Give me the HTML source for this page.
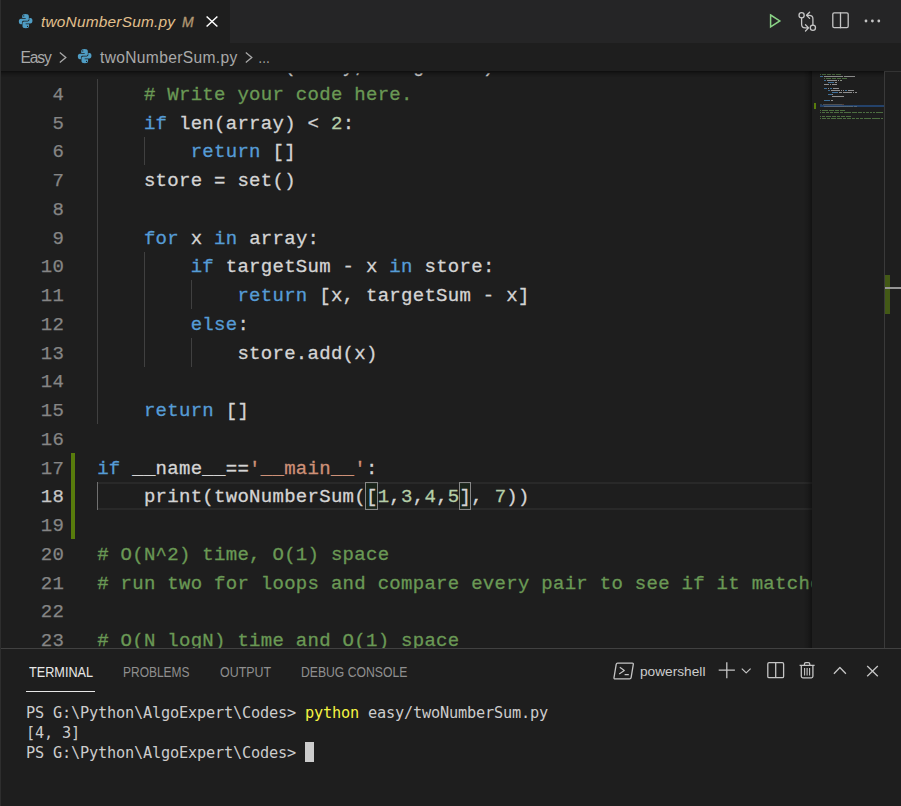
<!DOCTYPE html>
<html lang="en">
<head>
<meta charset="utf-8">
<title>twoNumberSum.py - Visual Studio Code</title>
<style>
html,body{margin:0;padding:0;background:#1e1e1e;}
body{width:901px;height:806px;position:relative;overflow:hidden;font-family:"Liberation Sans","DejaVu Sans",sans-serif;color:#cccccc;}
.abs{position:absolute;}
#tabbar{left:0;top:0;width:901px;height:43px;background:#252526;}
#tab{left:0;top:0;width:230px;height:43px;background:#1e1e1e;}
#tabname{left:41px;top:12px;font-size:15.4px;letter-spacing:0.22px;font-style:italic;color:#e2c08d;white-space:nowrap;line-height:20px;}
#tabM{left:182px;top:12px;font-size:14px;-webkit-text-stroke:0.35px;font-style:italic;color:#b19771;white-space:nowrap;line-height:20px;}
#crumbs{left:0;top:43px;width:901px;height:28px;background:#1e1e1e;}
.crumb{top:5.3px;font-size:15.6px;color:#a9a9a9;white-space:nowrap;line-height:20px;}
#editor{left:0;top:71px;width:901px;height:577px;background:#1e1e1e;overflow:hidden;}
.ln{-webkit-text-stroke:0.25px;left:0;width:64.2px;letter-spacing:0.286px;text-align:right;height:28.75px;line-height:28.75px;color:#858585;font-family:"Liberation Mono","DejaVu Sans Mono",monospace;font-size:19px;white-space:pre;}
.ln.cur{color:#c6c6c6;}
.cl{-webkit-text-stroke:0.3px;left:97.14px;letter-spacing:0.286px;height:28.75px;line-height:28.75px;color:#d4d4d4;font-family:"Liberation Mono","DejaVu Sans Mono",monospace;font-size:19px;white-space:pre;}
.k{color:#569cd6;}
.c{color:#6a9955;}
.n{color:#b5cea8;}
.s{color:#ce9178;}
.guide{width:1px;background:#404040;}
.guide.act{background:#707070;}
#panel{left:0;top:648px;width:901px;height:158px;background:#1e1e1e;border-top:1px solid #414141;box-sizing:border-box;}
.ptab{top:14px;font-size:13.9px;transform:scaleX(0.895);transform-origin:0 50%;color:#8f8f8f;white-space:nowrap;line-height:18px;}
.ptab.on{color:#e7e7e7;}
.tl{left:26px;height:20px;line-height:20px;margin-top:-0.4px;font-family:"DejaVu Sans Mono","Liberation Mono",monospace;font-size:15.25px;letter-spacing:-0.18px;color:#cccccc;white-space:pre;}
.y{color:#f5f543;}
svg{position:absolute;overflow:visible;}
</style>
</head>
<body>

<!-- ===== tab bar ===== -->
<div id="tabbar" class="abs">
  <div id="tab" class="abs">
    <svg style="left:17.8px;top:12.8px" width="15.3" height="16.3" viewBox="0 0 24 24" preserveAspectRatio="none"><g fill="#4f9dc4"><path d="M11.8 1.5C8.2 1.5 6.6 2.7 6.6 4.8V7.5H12V8.5H4.6C2.500 8.500 1.300 10.100 1.300 12.500C1.300 14.900 2.500 16.500 4.400 16.500H6.200V13.900C6.200 12.400 7.400 11.500 8.900 11.500H14.300C15.900 11.500 17 10.400 17 8.800V4.800C17 2.800 15.400 1.500 11.800 1.500ZM9 3.300a1 1 0 1 1 0 2a1 1 0 0 1 0-2z"/><path d="M11.8 1.5C8.2 1.5 6.6 2.7 6.6 4.8V7.5H12V8.5H4.6C2.500 8.500 1.300 10.100 1.300 12.500C1.300 14.900 2.500 16.500 4.400 16.500H6.200V13.900C6.200 12.400 7.400 11.500 8.900 11.500H14.300C15.900 11.500 17 10.400 17 8.800V4.800C17 2.800 15.400 1.500 11.800 1.500ZM9 3.300a1 1 0 1 1 0 2a1 1 0 0 1 0-2z" transform="rotate(180 12 12)"/></g></svg>
    <div id="tabname" class="abs">twoNumberSum.py</div>
    <div id="tabM" class="abs">M</div>
    <svg style="left:206px;top:15.5px" width="12" height="11" viewBox="0 0 12 11"><path d="M0.600 0.500L11.400 10.500M11.400 0.500L0.600 10.500" stroke="#ffffff" stroke-width="1.500" fill="none"/></svg>
  </div>
  <!-- editor actions -->
  <svg style="left:0;top:0" width="901" height="43" viewBox="0 0 901 43"><g stroke="#c5c5c5" stroke-width="1.300" fill="none" stroke-linejoin="round" stroke-linecap="round">
    <path d="M770.600 15L779.800 20.900L770.600 26.800Z" stroke="#89d185" stroke-width="1.500" stroke-linejoin="miter" stroke-linecap="butt"/>
    <circle cx="801.600" cy="15.300" r="2.600"/>
    <circle cx="812.900" cy="27.800" r="2.600"/>
    <path d="M801.600 18V24.300Q801.600 27.900 805.200 27.900H808.300M805.500 24.800L808.600 27.900L805.500 31"/>
    <path d="M812.900 25.100V18.800Q812.900 15.300 809.300 15.300H806.600M809.600 12.200L806.500 15.300L809.600 18.400"/>
    <rect x="832.800" y="12.900" width="15.400" height="14.800" rx="1.400"/>
    <path d="M840.500 12.900V27.700"/>
    <g fill="#c5c5c5" stroke="none"><circle cx="866" cy="21" r="1.400"/><circle cx="872.400" cy="21" r="1.400"/><circle cx="878.800" cy="21" r="1.400"/></g>
  </g></svg>
</div>

<!-- ===== breadcrumbs ===== -->
<div id="crumbs" class="abs">
  <div class="crumb abs" style="left:20.5px;letter-spacing:-1.1px">Easy</div>
  <svg style="left:59px;top:9px" width="8" height="11" viewBox="0 0 8 11"><path d="M0.800 0.600L6.800 5.500L0.800 10.400" stroke="#a9a9a9" stroke-width="1.300" fill="none"/></svg>
  <svg style="left:76.5px;top:4.9px" width="15.3" height="16.3" viewBox="0 0 24 24" preserveAspectRatio="none"><g fill="#4f9dc4"><path d="M11.8 1.5C8.2 1.5 6.6 2.7 6.6 4.8V7.5H12V8.5H4.6C2.500 8.500 1.300 10.100 1.300 12.500C1.300 14.900 2.500 16.500 4.400 16.500H6.200V13.900C6.200 12.400 7.400 11.500 8.900 11.500H14.300C15.900 11.500 17 10.400 17 8.800V4.800C17 2.800 15.400 1.500 11.800 1.500ZM9 3.300a1 1 0 1 1 0 2a1 1 0 0 1 0-2z"/><path d="M11.8 1.5C8.2 1.5 6.6 2.7 6.6 4.8V7.5H12V8.5H4.6C2.500 8.500 1.300 10.100 1.300 12.500C1.300 14.900 2.500 16.500 4.400 16.500H6.200V13.900C6.200 12.400 7.400 11.500 8.900 11.500H14.300C15.900 11.500 17 10.400 17 8.800V4.800C17 2.800 15.400 1.500 11.800 1.500ZM9 3.300a1 1 0 1 1 0 2a1 1 0 0 1 0-2z" transform="rotate(180 12 12)"/></g></svg>
  <div class="crumb abs" style="left:100px;letter-spacing:0.33px">twoNumberSum.py</div>
  <svg style="left:245px;top:9px" width="8" height="11" viewBox="0 0 8 11"><path d="M0.800 0.600L6.800 5.500L0.800 10.400" stroke="#a9a9a9" stroke-width="1.300" fill="none"/></svg>
  <div class="crumb abs" style="left:258px;transform:scaleX(0.78);transform-origin:0 50%">…</div>
</div>

<!-- ===== editor ===== -->
<div id="editor" class="abs">
<div class="abs" style="left:97px;top:411.00px;width:715px;height:28.00px;box-sizing:border-box;border-top:2px solid #292929;border-bottom:2px solid #292929"></div>
<div class="abs" style="left:365.31px;top:411.00px;width:12.69px;height:28.00px;box-sizing:border-box;border:1px solid #888888;background:rgba(0,100,0,0.1)"></div>
<div class="abs" style="left:458.81px;top:411.00px;width:12.69px;height:28.00px;box-sizing:border-box;border:1px solid #888888;background:rgba(0,100,0,0.1)"></div>
<div class="abs guide" style="left:97.00px;top:8.00px;height:345.00px"></div>
<div class="abs guide" style="left:143.75px;top:65.50px;height:28.75px"></div>
<div class="abs guide" style="left:143.75px;top:180.50px;height:115.00px"></div>
<div class="abs guide" style="left:190.50px;top:209.25px;height:28.75px"></div>
<div class="abs guide" style="left:190.50px;top:266.75px;height:28.75px"></div>
<div class="abs guide act" style="left:97.00px;top:410.50px;height:28.75px"></div>
<div class="abs" style="left:71px;top:381.75px;width:3.5px;height:86.25px;background:#587c0c"></div>
<div class="cl abs" style="top:-18.05px;clip-path:inset(20.2px 0 0 0)"><span class="k">def</span> twoNumberSum(array, targetSum):</div>
<div class="ln abs" style="top:9.80px">4</div>
<div class="cl abs" style="top:9.80px">    <span class="c"># Write your code here.</span></div>
<div class="ln abs" style="top:38.55px">5</div>
<div class="cl abs" style="top:38.55px">    <span class="k">if</span> len(array) &lt; <span class="n">2</span>:</div>
<div class="ln abs" style="top:67.30px">6</div>
<div class="cl abs" style="top:67.30px">        <span class="k">return</span> []</div>
<div class="ln abs" style="top:96.05px">7</div>
<div class="cl abs" style="top:96.05px">    store = set()</div>
<div class="ln abs" style="top:124.80px">8</div>
<div class="ln abs" style="top:153.55px">9</div>
<div class="cl abs" style="top:153.55px">    <span class="k">for</span> x <span class="k">in</span> array:</div>
<div class="ln abs" style="top:182.30px">10</div>
<div class="cl abs" style="top:182.30px">        <span class="k">if</span> targetSum - x <span class="k">in</span> store:</div>
<div class="ln abs" style="top:211.05px">11</div>
<div class="cl abs" style="top:211.05px">            <span class="k">return</span> [x, targetSum - x]</div>
<div class="ln abs" style="top:239.80px">12</div>
<div class="cl abs" style="top:239.80px">        <span class="k">else</span>:</div>
<div class="ln abs" style="top:268.55px">13</div>
<div class="cl abs" style="top:268.55px">            store.add(x)</div>
<div class="ln abs" style="top:297.30px">14</div>
<div class="ln abs" style="top:326.05px">15</div>
<div class="cl abs" style="top:326.05px">    <span class="k">return</span> []</div>
<div class="ln abs" style="top:354.80px">16</div>
<div class="ln abs" style="top:383.55px">17</div>
<div class="cl abs" style="top:383.55px"><span class="k">if</span> __name__==<span class="s">&#x27;__main__&#x27;</span>:</div>
<div class="ln abs cur" style="top:412.30px">18</div>
<div class="cl abs" style="top:412.30px">    print(twoNumberSum([<span class="n">1</span>,<span class="n">3</span>,<span class="n">4</span>,<span class="n">5</span>], <span class="n">7</span>))</div>
<div class="ln abs" style="top:441.05px">19</div>
<div class="ln abs" style="top:469.80px">20</div>
<div class="cl abs" style="top:469.80px"><span class="c"># O(N^2) time, O(1) space</span></div>
<div class="ln abs" style="top:498.55px">21</div>
<div class="cl abs" style="top:498.55px"><span class="c"># run two for loops and compare every pair to see if it matches the target sum</span></div>
<div class="ln abs" style="top:527.30px">22</div>
<div class="ln abs" style="top:556.05px">23</div>
<div class="cl abs" style="top:556.05px"><span class="c"># O(N logN) time and O(1) space</span></div>
<div class="ln abs" style="top:584.80px">24</div>
<div class="cl abs" style="top:584.80px"><span class="c"># sort the array first and then use the two pointer approach to find the pair</span></div>
<div class="abs" style="left:812px;top:0;width:89px;height:577px;background:#1e1e1e"></div>
<div class="abs" style="left:803px;top:0;width:9px;height:577px;background:linear-gradient(to right,rgba(0,0,0,0),rgba(0,0,0,0.12) 50%,rgba(0,0,0,0.4))"></div>
<div class="abs" style="left:820px;top:34.25px;width:64px;height:2px;background:#24426a"></div>
<div class="abs" style="left:814px;top:32.25px;width:2px;height:6px;background:#587c0c"></div>
<div class="abs" style="left:820px;top:2.55px;width:1px;height:1.3px;background:#4c6d40"></div>
<div class="abs" style="left:822px;top:2.55px;width:4px;height:1.3px;background:#4c6d40"></div>
<div class="abs" style="left:827px;top:2.55px;width:4px;height:1.3px;background:#4c6d40"></div>
<div class="abs" style="left:832px;top:2.55px;width:3px;height:1.3px;background:#4c6d40"></div>
<div class="abs" style="left:836px;top:2.55px;width:5px;height:1.3px;background:#4c6d40"></div>
<div class="abs" style="left:820px;top:4.55px;width:3px;height:1.3px;background:#3f6f98"></div>
<div class="abs" style="left:824px;top:4.55px;width:12px;height:1.3px;background:#8f8f8f"></div>
<div class="abs" style="left:836px;top:4.55px;width:1px;height:1.3px;background:#8f8f8f"></div>
<div class="abs" style="left:837px;top:4.55px;width:5px;height:1.3px;background:#8f8f8f"></div>
<div class="abs" style="left:842px;top:4.55px;width:1px;height:1.3px;background:#8f8f8f"></div>
<div class="abs" style="left:844px;top:4.55px;width:9px;height:1.3px;background:#8f8f8f"></div>
<div class="abs" style="left:853px;top:4.55px;width:2px;height:1.3px;background:#8f8f8f"></div>
<div class="abs" style="left:824px;top:6.55px;width:1px;height:1.3px;background:#4c6d40"></div>
<div class="abs" style="left:826px;top:6.55px;width:5px;height:1.3px;background:#4c6d40"></div>
<div class="abs" style="left:832px;top:6.55px;width:4px;height:1.3px;background:#4c6d40"></div>
<div class="abs" style="left:837px;top:6.55px;width:4px;height:1.3px;background:#4c6d40"></div>
<div class="abs" style="left:842px;top:6.55px;width:5px;height:1.3px;background:#4c6d40"></div>
<div class="abs" style="left:824px;top:8.55px;width:2px;height:1.3px;background:#3f6f98"></div>
<div class="abs" style="left:827px;top:8.55px;width:3px;height:1.3px;background:#8f8f8f"></div>
<div class="abs" style="left:830px;top:8.55px;width:1px;height:1.3px;background:#8f8f8f"></div>
<div class="abs" style="left:831px;top:8.55px;width:5px;height:1.3px;background:#8f8f8f"></div>
<div class="abs" style="left:836px;top:8.55px;width:1px;height:1.3px;background:#8f8f8f"></div>
<div class="abs" style="left:838px;top:8.55px;width:1px;height:1.3px;background:#8f8f8f"></div>
<div class="abs" style="left:840px;top:8.55px;width:1px;height:1.3px;background:#82927a"></div>
<div class="abs" style="left:841px;top:8.55px;width:1px;height:1.3px;background:#8f8f8f"></div>
<div class="abs" style="left:828px;top:10.55px;width:6px;height:1.3px;background:#3f6f98"></div>
<div class="abs" style="left:835px;top:10.55px;width:2px;height:1.3px;background:#8f8f8f"></div>
<div class="abs" style="left:824px;top:12.55px;width:5px;height:1.3px;background:#8f8f8f"></div>
<div class="abs" style="left:830px;top:12.55px;width:1px;height:1.3px;background:#8f8f8f"></div>
<div class="abs" style="left:832px;top:12.55px;width:3px;height:1.3px;background:#8f8f8f"></div>
<div class="abs" style="left:835px;top:12.55px;width:2px;height:1.3px;background:#8f8f8f"></div>
<div class="abs" style="left:824px;top:16.55px;width:3px;height:1.3px;background:#3f6f98"></div>
<div class="abs" style="left:828px;top:16.55px;width:1px;height:1.3px;background:#8f8f8f"></div>
<div class="abs" style="left:830px;top:16.55px;width:2px;height:1.3px;background:#3f6f98"></div>
<div class="abs" style="left:833px;top:16.55px;width:5px;height:1.3px;background:#8f8f8f"></div>
<div class="abs" style="left:838px;top:16.55px;width:1px;height:1.3px;background:#8f8f8f"></div>
<div class="abs" style="left:828px;top:18.55px;width:2px;height:1.3px;background:#3f6f98"></div>
<div class="abs" style="left:831px;top:18.55px;width:9px;height:1.3px;background:#8f8f8f"></div>
<div class="abs" style="left:841px;top:18.55px;width:1px;height:1.3px;background:#8f8f8f"></div>
<div class="abs" style="left:843px;top:18.55px;width:1px;height:1.3px;background:#8f8f8f"></div>
<div class="abs" style="left:845px;top:18.55px;width:2px;height:1.3px;background:#3f6f98"></div>
<div class="abs" style="left:848px;top:18.55px;width:5px;height:1.3px;background:#8f8f8f"></div>
<div class="abs" style="left:853px;top:18.55px;width:1px;height:1.3px;background:#8f8f8f"></div>
<div class="abs" style="left:832px;top:20.55px;width:6px;height:1.3px;background:#3f6f98"></div>
<div class="abs" style="left:839px;top:20.55px;width:1px;height:1.3px;background:#8f8f8f"></div>
<div class="abs" style="left:840px;top:20.55px;width:1px;height:1.3px;background:#8f8f8f"></div>
<div class="abs" style="left:841px;top:20.55px;width:1px;height:1.3px;background:#8f8f8f"></div>
<div class="abs" style="left:843px;top:20.55px;width:9px;height:1.3px;background:#8f8f8f"></div>
<div class="abs" style="left:853px;top:20.55px;width:1px;height:1.3px;background:#8f8f8f"></div>
<div class="abs" style="left:855px;top:20.55px;width:1px;height:1.3px;background:#8f8f8f"></div>
<div class="abs" style="left:856px;top:20.55px;width:1px;height:1.3px;background:#8f8f8f"></div>
<div class="abs" style="left:828px;top:22.55px;width:4px;height:1.3px;background:#3f6f98"></div>
<div class="abs" style="left:832px;top:22.55px;width:1px;height:1.3px;background:#8f8f8f"></div>
<div class="abs" style="left:832px;top:24.55px;width:5px;height:1.3px;background:#8f8f8f"></div>
<div class="abs" style="left:837px;top:24.55px;width:1px;height:1.3px;background:#8f8f8f"></div>
<div class="abs" style="left:838px;top:24.55px;width:3px;height:1.3px;background:#8f8f8f"></div>
<div class="abs" style="left:841px;top:24.55px;width:1px;height:1.3px;background:#8f8f8f"></div>
<div class="abs" style="left:842px;top:24.55px;width:1px;height:1.3px;background:#8f8f8f"></div>
<div class="abs" style="left:843px;top:24.55px;width:1px;height:1.3px;background:#8f8f8f"></div>
<div class="abs" style="left:824px;top:28.55px;width:6px;height:1.3px;background:#3f6f98"></div>
<div class="abs" style="left:831px;top:28.55px;width:2px;height:1.3px;background:#8f8f8f"></div>
<div class="abs" style="left:820px;top:32.55px;width:2px;height:1.3px;background:#3f6f98;opacity:0.45"></div>
<div class="abs" style="left:823px;top:32.55px;width:8px;height:1.3px;background:#8f8f8f;opacity:0.45"></div>
<div class="abs" style="left:831px;top:32.55px;width:3px;height:1.3px;background:#8f8f8f;opacity:0.45"></div>
<div class="abs" style="left:834px;top:32.55px;width:8px;height:1.3px;background:#8f8f8f;opacity:0.45"></div>
<div class="abs" style="left:842px;top:32.55px;width:2px;height:1.3px;background:#926853;opacity:0.45"></div>
<div class="abs" style="left:824px;top:34.55px;width:5px;height:1.3px;background:#8f8f8f;opacity:0.45"></div>
<div class="abs" style="left:829px;top:34.55px;width:1px;height:1.3px;background:#8f8f8f;opacity:0.45"></div>
<div class="abs" style="left:830px;top:34.55px;width:12px;height:1.3px;background:#8f8f8f;opacity:0.45"></div>
<div class="abs" style="left:842px;top:34.55px;width:2px;height:1.3px;background:#8f8f8f;opacity:0.45"></div>
<div class="abs" style="left:844px;top:34.55px;width:1px;height:1.3px;background:#82927a;opacity:0.45"></div>
<div class="abs" style="left:845px;top:34.55px;width:1px;height:1.3px;background:#8f8f8f;opacity:0.45"></div>
<div class="abs" style="left:846px;top:34.55px;width:1px;height:1.3px;background:#82927a;opacity:0.45"></div>
<div class="abs" style="left:847px;top:34.55px;width:1px;height:1.3px;background:#8f8f8f;opacity:0.45"></div>
<div class="abs" style="left:848px;top:34.55px;width:1px;height:1.3px;background:#82927a;opacity:0.45"></div>
<div class="abs" style="left:849px;top:34.55px;width:1px;height:1.3px;background:#8f8f8f;opacity:0.45"></div>
<div class="abs" style="left:850px;top:34.55px;width:1px;height:1.3px;background:#82927a;opacity:0.45"></div>
<div class="abs" style="left:851px;top:34.55px;width:2px;height:1.3px;background:#8f8f8f;opacity:0.45"></div>
<div class="abs" style="left:854px;top:34.55px;width:1px;height:1.3px;background:#82927a;opacity:0.45"></div>
<div class="abs" style="left:855px;top:34.55px;width:2px;height:1.3px;background:#8f8f8f;opacity:0.45"></div>
<div class="abs" style="left:820px;top:38.55px;width:1px;height:1.3px;background:#4c6d40"></div>
<div class="abs" style="left:822px;top:38.55px;width:6px;height:1.3px;background:#4c6d40"></div>
<div class="abs" style="left:829px;top:38.55px;width:5px;height:1.3px;background:#4c6d40"></div>
<div class="abs" style="left:835px;top:38.55px;width:4px;height:1.3px;background:#4c6d40"></div>
<div class="abs" style="left:840px;top:38.55px;width:5px;height:1.3px;background:#4c6d40"></div>
<div class="abs" style="left:820px;top:40.55px;width:1px;height:1.3px;background:#4c6d40"></div>
<div class="abs" style="left:822px;top:40.55px;width:3px;height:1.3px;background:#4c6d40"></div>
<div class="abs" style="left:826px;top:40.55px;width:3px;height:1.3px;background:#4c6d40"></div>
<div class="abs" style="left:830px;top:40.55px;width:3px;height:1.3px;background:#4c6d40"></div>
<div class="abs" style="left:834px;top:40.55px;width:5px;height:1.3px;background:#4c6d40"></div>
<div class="abs" style="left:840px;top:40.55px;width:3px;height:1.3px;background:#4c6d40"></div>
<div class="abs" style="left:844px;top:40.55px;width:7px;height:1.3px;background:#4c6d40"></div>
<div class="abs" style="left:852px;top:40.55px;width:5px;height:1.3px;background:#4c6d40"></div>
<div class="abs" style="left:858px;top:40.55px;width:4px;height:1.3px;background:#4c6d40"></div>
<div class="abs" style="left:863px;top:40.55px;width:2px;height:1.3px;background:#4c6d40"></div>
<div class="abs" style="left:866px;top:40.55px;width:3px;height:1.3px;background:#4c6d40"></div>
<div class="abs" style="left:870px;top:40.55px;width:2px;height:1.3px;background:#4c6d40"></div>
<div class="abs" style="left:873px;top:40.55px;width:2px;height:1.3px;background:#4c6d40"></div>
<div class="abs" style="left:876px;top:40.55px;width:7px;height:1.3px;background:#4c6d40"></div>
<div class="abs" style="left:820px;top:44.55px;width:1px;height:1.3px;background:#4c6d40"></div>
<div class="abs" style="left:822px;top:44.55px;width:3px;height:1.3px;background:#4c6d40"></div>
<div class="abs" style="left:826px;top:44.55px;width:5px;height:1.3px;background:#4c6d40"></div>
<div class="abs" style="left:832px;top:44.55px;width:4px;height:1.3px;background:#4c6d40"></div>
<div class="abs" style="left:837px;top:44.55px;width:3px;height:1.3px;background:#4c6d40"></div>
<div class="abs" style="left:841px;top:44.55px;width:4px;height:1.3px;background:#4c6d40"></div>
<div class="abs" style="left:846px;top:44.55px;width:5px;height:1.3px;background:#4c6d40"></div>
<div class="abs" style="left:820px;top:46.55px;width:1px;height:1.3px;background:#4c6d40"></div>
<div class="abs" style="left:822px;top:46.55px;width:4px;height:1.3px;background:#4c6d40"></div>
<div class="abs" style="left:827px;top:46.55px;width:3px;height:1.3px;background:#4c6d40"></div>
<div class="abs" style="left:831px;top:46.55px;width:5px;height:1.3px;background:#4c6d40"></div>
<div class="abs" style="left:837px;top:46.55px;width:5px;height:1.3px;background:#4c6d40"></div>
<div class="abs" style="left:843px;top:46.55px;width:3px;height:1.3px;background:#4c6d40"></div>
<div class="abs" style="left:847px;top:46.55px;width:4px;height:1.3px;background:#4c6d40"></div>
<div class="abs" style="left:852px;top:46.55px;width:3px;height:1.3px;background:#4c6d40"></div>
<div class="abs" style="left:856px;top:46.55px;width:3px;height:1.3px;background:#4c6d40"></div>
<div class="abs" style="left:860px;top:46.55px;width:3px;height:1.3px;background:#4c6d40"></div>
<div class="abs" style="left:864px;top:46.55px;width:7px;height:1.3px;background:#4c6d40"></div>
<div class="abs" style="left:872px;top:46.55px;width:8px;height:1.3px;background:#4c6d40"></div>
<div class="abs" style="left:881px;top:46.55px;width:2px;height:1.3px;background:#4c6d40"></div>
<div class="abs" style="left:884px;top:0;width:1px;height:577px;background:#3a3a3a"></div>
<div class="abs" style="left:884px;top:0;width:17px;height:1px;background:#333333"></div>
<div class="abs" style="left:885px;top:204px;width:5px;height:39px;background:#435916"></div>
<div class="abs" style="left:885px;top:216px;width:16px;height:2px;background:#969696"></div>
<div class="abs" style="left:0;top:0;width:884px;height:6px;box-shadow:#000 0 6px 6px -6px inset"></div>
</div>

<!-- ===== panel ===== -->
<div id="panel" class="abs">
  <div class="ptab on abs" style="left:28.6px;transform:scaleX(0.912)">TERMINAL</div>
  <div class="abs" style="left:26px;top:42px;width:69px;height:1px;background:#e7e7e7"></div>
  <div class="ptab abs" style="left:123px;transform:scaleX(0.862)">PROBLEMS</div>
  <div class="ptab abs" style="left:220px">OUTPUT</div>
  <div class="ptab abs" style="left:301px;transform:scaleX(0.877)">DEBUG CONSOLE</div>
  <svg style="left:0;top:-1px" width="901" height="158" viewBox="0 648 901 158"><g stroke="#c5c5c5" stroke-width="1.300" fill="none" stroke-linejoin="round">
    <path d="M617.600 663.100H632.200Q633.500 663.100 633.300 664.400L631.100 677.700Q630.900 678.900 629.600 678.900H615.100Q613.800 678.900 614 677.600L616.200 664.300Q616.400 663.100 617.600 663.100Z"/>
    <path d="M619.800 667.300L624.300 670.600L619.200 673.900M624.600 674.600H628.800" stroke-width="1.200"/>
    <path d="M726.800 662.200V678.200M718.700 670.200H734.900"/>
    <path d="M741.800 668.600L746.200 672.900L750.600 668.600" stroke-width="1.200"/>
    <rect x="767.800" y="662.700" width="15.800" height="15" rx="1.300"/>
    <path d="M775.700 662.700V677.700"/>
    <path d="M799.600 665.400H814.600M804.400 665.200V664.200Q804.400 662.700 805.900 662.700H808.300Q809.800 662.700 809.800 664.200V665.200M801.300 665.600V676.300Q801.300 677.800 802.800 677.800H811.400Q812.900 677.800 812.900 676.300V665.600"/>
    <path d="M804.600 668V675.500M807.100 668V675.500M809.600 668V675.500" stroke-width="1.100"/>
    <path d="M833.900 673.700L839.900 667.500L845.900 673.700"/>
    <path d="M867.200 666L877.800 676.200M877.800 666L867.200 676.200"/>
  </g></svg>
  <div class="abs" style="left:640px;top:13.2px;font-size:13.7px;line-height:20px;color:#cccccc;white-space:nowrap" id="psh">powershell</div>
  <div class="tl abs" style="top:54px">PS G:\Python\AlgoExpert\Codes&gt; <span class="y">python</span> easy/twoNumberSum.py</div>
  <div class="tl abs" style="top:74px">[4, 3]</div>
  <div class="tl abs" style="top:94px">PS G:\Python\AlgoExpert\Codes&gt; </div>
  <div class="abs" style="left:305px;top:93px;width:9px;height:20px;background:#cccccc"></div>
</div>

<div class="abs" style="left:0;top:0;width:1px;height:806px;background:#2e2e2e"></div>
</body>
</html>
